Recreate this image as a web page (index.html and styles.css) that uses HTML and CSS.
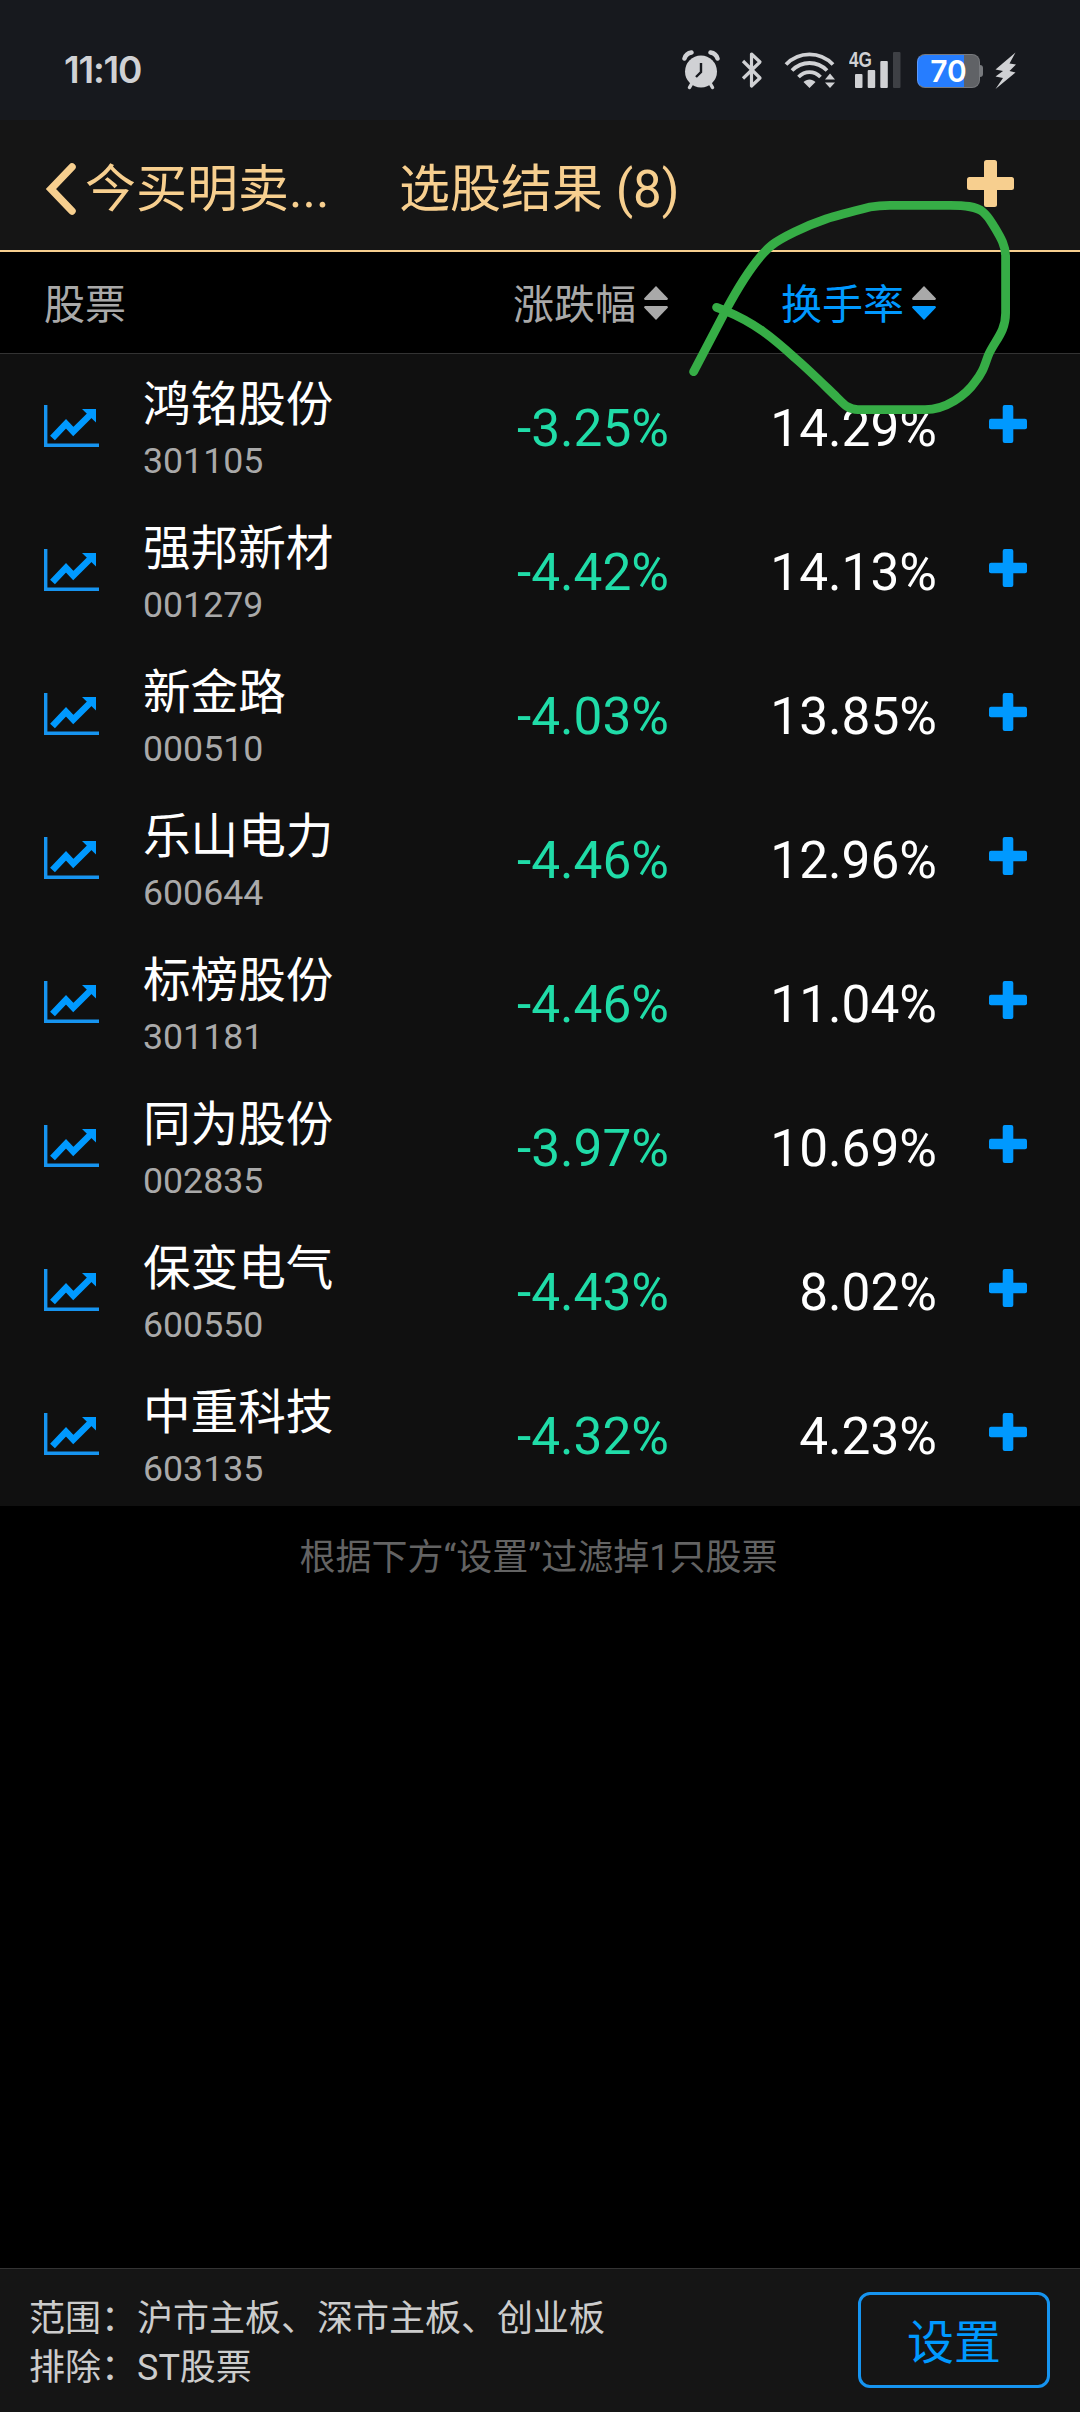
FILE: index.html
```html
<!DOCTYPE html>
<html lang="zh-CN">
<head>
<meta charset="UTF-8" />
<meta name="viewport" content="width=device-width, initial-scale=1" />
<title>选股结果</title>
<link rel="stylesheet" href="styles.css">
</head>
<body>
<svg class="symbols" aria-hidden="true">
  <symbol id="chart" viewBox="0 0 56 42">
    <path d="M1.7 0v40.2H55" fill="none" stroke="#1694f0" stroke-width="3.4"/>
    <path d="M8.500 33 22 18.700l7.300 7.800L46 10" fill="none" stroke="#0099ff" stroke-width="6.600"/>
    <path d="M38 4h14v13.500z" fill="#0099ff"/>
  </symbol>
  <symbol id="plus" viewBox="0 0 38 38">
    <rect x="13.700" y="0" width="10.600" height="38" rx="2"/>
    <rect x="0" y="13.700" width="38" height="10.600" rx="2"/>
  </symbol>
</svg>

<div class="status-bar">
  <span class="clock">11:10</span>
  <div class="status-icons">
    <svg class="alarm" width="38" height="40" viewBox="0 0 38 40">
      <g fill="none" stroke="#d0d1d4" stroke-linecap="round">
        <path d="M2.500 8.500C3.500 5 6 3 9.500 2.500M35.500 8.500C34.500 5 32 3 28.500 2.500" stroke-width="4.500"/>
        <path d="M9.500 34 7.500 37.500M28.500 34l2 3.500" stroke-width="3.500"/>
      </g>
      <circle cx="19" cy="21.500" r="16" fill="#d0d1d4"/>
      <path d="M19 13v9l-5 5" fill="none" stroke="#17191e" stroke-width="2.400"/>
    </svg>
    <svg class="bluetooth" width="22" height="38" viewBox="0 0 22 38">
      <path d="M2 10l17 17-8.500 8V3l8.500 8L2 27.500" fill="none" stroke="#d0d1d4" stroke-width="3.200" stroke-linejoin="round"/>
    </svg>
    <svg class="wifi" width="52" height="38" viewBox="0 0 52 38">
      <g fill="none" stroke="#d0d1d4" stroke-width="3.800">
        <path d="M2 13.500C15 0 36 0 49 13.500"/>
        <path d="M8 19.500C18 9.500 33 9.500 43 19.500"/>
        <path d="M14.500 26C21 19.500 30 19.500 36.500 26"/>
      </g>
      <path d="M19.500 31C23 27.500 28 27.500 31.500 31l-6 6zM41 28.500l5-6 5 6zM41 31.500l5 5.500 5-5.500z" fill="#d0d1d4"/>
    </svg>
    <div class="signal">
      <span class="network">4G</span>
      <svg width="46" height="38" viewBox="0 0 46 38" fill="#d0d1d4">
        <rect x="0" y="23" width="7.500" height="14" rx="1"/>
        <rect x="12.700" y="19" width="7.500" height="18" rx="1"/>
        <rect x="25.300" y="10" width="7.500" height="27" rx="1"/>
        <rect x="38" y="1" width="7.500" height="36" rx="1" fill="#3e4045"/>
      </svg>
    </div>
    <div class="battery"><span>70</span></div>
    <svg class="bolt" width="22" height="38" viewBox="0 0 22 38">
      <path d="M20.500.5.500 17.500l7.500 1.500-7.500 5.500L8 26 .5 37 20.500 20.500l-6-1.500 6.500-6.500-6.500-1z" fill="#d0d1d4"/>
    </svg>
  </div>
</div>

<header class="header">
  <div class="back">
    <svg width="32" height="52" viewBox="0 0 32 52">
      <path d="M27 4 6 26l21 22" fill="none" stroke="#f7cf8f" stroke-width="7.500" stroke-linecap="round"/>
    </svg>
    <span>今买明卖...</span>
  </div>
  <h1>选股结果 (8)</h1>
  <svg class="header-add" width="47" height="47" viewBox="0 0 47 47" fill="#f7cf8f">
    <rect x="17" y="0" width="13" height="47" rx="2.500"/>
    <rect x="0" y="17" width="47" height="13" rx="2.500"/>
  </svg>
</header>

<div class="table-head">
  <span class="head-name">股票</span>
  <span class="head-cell">涨跌幅<i class="sort"><b class="up"></b><b class="down"></b></i></span>
  <span class="head-cell active">换手率<i class="sort"><b class="up"></b><b class="down"></b></i></span>
</div>

<main class="stock-list">
  <div class="stock">
    <svg class="chart"><use href="#chart"/></svg>
    <div class="info"><p class="name">鸿铭股份</p><p class="code">301105</p></div>
    <span class="value change">-3.25%</span>
    <span class="value">14.29%</span>
    <svg class="add"><use href="#plus"/></svg>
  </div>
  <div class="stock">
    <svg class="chart"><use href="#chart"/></svg>
    <div class="info"><p class="name">强邦新材</p><p class="code">001279</p></div>
    <span class="value change">-4.42%</span>
    <span class="value">14.13%</span>
    <svg class="add"><use href="#plus"/></svg>
  </div>
  <div class="stock">
    <svg class="chart"><use href="#chart"/></svg>
    <div class="info"><p class="name">新金路</p><p class="code">000510</p></div>
    <span class="value change">-4.03%</span>
    <span class="value">13.85%</span>
    <svg class="add"><use href="#plus"/></svg>
  </div>
  <div class="stock">
    <svg class="chart"><use href="#chart"/></svg>
    <div class="info"><p class="name">乐山电力</p><p class="code">600644</p></div>
    <span class="value change">-4.46%</span>
    <span class="value">12.96%</span>
    <svg class="add"><use href="#plus"/></svg>
  </div>
  <div class="stock">
    <svg class="chart"><use href="#chart"/></svg>
    <div class="info"><p class="name">标榜股份</p><p class="code">301181</p></div>
    <span class="value change">-4.46%</span>
    <span class="value">11.04%</span>
    <svg class="add"><use href="#plus"/></svg>
  </div>
  <div class="stock">
    <svg class="chart"><use href="#chart"/></svg>
    <div class="info"><p class="name">同为股份</p><p class="code">002835</p></div>
    <span class="value change">-3.97%</span>
    <span class="value">10.69%</span>
    <svg class="add"><use href="#plus"/></svg>
  </div>
  <div class="stock">
    <svg class="chart"><use href="#chart"/></svg>
    <div class="info"><p class="name">保变电气</p><p class="code">600550</p></div>
    <span class="value change">-4.43%</span>
    <span class="value">8.02%</span>
    <svg class="add"><use href="#plus"/></svg>
  </div>
  <div class="stock">
    <svg class="chart"><use href="#chart"/></svg>
    <div class="info"><p class="name">中重科技</p><p class="code">603135</p></div>
    <span class="value change">-4.32%</span>
    <span class="value">4.23%</span>
    <svg class="add"><use href="#plus"/></svg>
  </div>
</main>

<p class="filter-note">根据下方“设置”过滤掉1只股票</p>

<footer class="footer">
  <div class="scope">
    <p>范围：沪市主板、深市主板、创业板</p>
    <p>排除：ST股票</p>
  </div>
  <button type="button" class="settings-btn">设置</button>
</footer>

<!-- hand-drawn mark around the turnover column -->
<svg class="mark" viewBox="680 190 340 230" width="340" height="230">
  <path d="M693.600 371.700 726 310C740 284 756 258 772 245C781 238 805 226 826 219C838 215 862 209 870 207C878 205.500 884 205.300 890 205.300H950C964 205.300 976 206 983 212C989 217 991 222 995 228C1001 238 1005.600 246 1005.600 256V313C1005.600 333 994 341 988 356C984 367 983 372 975 382C966 395 946 409.700 925 409.700H858C847 409.700 842 402 836 396.500C822 383 809 370 795 358C773 338 755 323 726 311L716.600 307.300"/>
</svg>
</body>
</html>
```

FILE: styles.css
```css
* {
  box-sizing: border-box;
}
body {
  position: relative;
  display: flex;
  flex-direction: column;
  width: 1080px;
  height: 2412px;
  margin: 0;
  overflow: hidden;
  background: #000;
  color: #fff;
  font-family: Roboto, "Noto Sans CJK SC", sans-serif;
}
p, h1 {
  margin: 0;
  font-weight: 400;
}
svg {
  display: block;
  flex-shrink: 0;
}
.symbols {
  position: absolute;
  width: 0;
  height: 0;
}

/* status bar */
.status-bar {
  display: flex;
  justify-content: space-between;
  height: 120px;
  padding: 50px 63px 0 64px;
  background: #17191e;
  color: #d0d1d4;
}
.clock {
  font-family: Inter, sans-serif;
  font-size: 37px;
  font-weight: 600;
  line-height: 40px;
  letter-spacing: -1.2px;
}
.status-icons {
  display: flex;
  align-items: flex-start;
}
.bluetooth {
  margin: 1px 0 0 21px;
}
.wifi {
  margin: 1px 0 0 21px;
}
.signal {
  position: relative;
  margin: 1px 0 0 19px;
}
.network {
  position: absolute;
  left: -6px;
  top: -1px;
  font-family: "Liberation Sans", sans-serif;
  font-size: 22px;
  font-weight: 700;
  line-height: 20px;
  transform: scaleX(0.78);
  transform-origin: left;
}
.battery {
  position: relative;
  width: 63px;
  height: 34px;
  margin: 4px 0 0 16px;
  border: 1px solid #77797d;
  border-left-color: #5b98fb;
  border-radius: 8px;
  background: linear-gradient(to right, #267dff 46px, #606266 46px);
  color: #fff;
  font-family: Inter, sans-serif;
  font-size: 30px;
  font-weight: 600;
  line-height: 33px;
  text-align: center;
}
.battery::after {
  content: "";
  position: absolute;
  right: -4px;
  top: 10px;
  width: 3px;
  height: 12px;
  border-radius: 0 3px 3px 0;
  background: #77797d;
}
.bolt {
  margin: 2px 0 0 15px;
}

/* header */
.header {
  display: flex;
  height: 132px;
  padding: 40px 66px 0 45px;
  border-bottom: 2px solid #f7cf8f;
  background: #151515;
  color: #f7cf8f;
  font-size: 51px;
  line-height: 60px;
}
.back {
  display: flex;
  width: 354px;
  gap: 8px;
}
.back svg {
  margin-top: 3px;
}
.header h1 {
  font-size: 51px;
}
.header-add {
  margin: 0 0 0 auto;
}

/* table head */
.table-head {
  display: grid;
  grid-template-columns: 356px 268px 268px;
  height: 102px;
  padding: 26px 0 0 44px;
  border-bottom: 1px solid #333;
  color: #a9a9a9;
  font-size: 41px;
  line-height: 54px;
}
.head-cell {
  display: flex;
  justify-content: flex-end;
  gap: 8px;
}
.head-cell.active {
  color: #0099ff;
}
.sort {
  display: flex;
  flex-direction: column;
  gap: 6px;
  padding-top: 8px;
}
.sort b {
  width: 24px;
  height: 14px;
  background: #a9a9a9;
}
.sort .up {
  clip-path: polygon(50% 0, 100% 90%, 97% 100%, 3% 100%, 0 90%);
}
.sort .down {
  clip-path: polygon(3% 0, 97% 0, 100% 10%, 50% 100%, 0 10%);
}
.sort .down {
  background: #a9a9a9;
}
.active .sort .down {
  background: #0099ff;
}

/* stocks */
.stock-list {
  background: #101010;
}
.stock {
  display: grid;
  grid-template-columns: 99px 258px 268px 268px 38px;
  height: 144px;
  padding-left: 44px;
}
.chart {
  width: 56px;
  height: 42px;
  margin-top: 51px;
}
.info {
  padding-top: 23px;
}
.name {
  font-size: 47.6px;
  line-height: 56px;
}
.code {
  margin-top: 7px;
  color: #a9a9a9;
  font-size: 35.7px;
  line-height: 42px;
}
.value {
  padding-top: 45px;
  font-size: 51.4px;
  line-height: 60px;
  text-align: right;
}
.change {
  color: #20dca8;
}
.add {
  width: 38px;
  height: 38px;
  margin: 51px 0 0 52px;
  fill: #0099ff;
}

.filter-note {
  padding: 30px 3px 0 0;
  color: #636363;
  font-size: 36px;
  line-height: 44px;
  text-align: center;
}

/* footer */
.footer {
  display: flex;
  justify-content: space-between;
  height: 144px;
  margin-top: auto;
  padding: 23px 30px 0 29px;
  border-top: 1px solid #333;
  background: #151515;
}
.scope {
  padding-top: 3px;
  color: #ccc;
  font-size: 36px;
  line-height: 49px;
}
.settings-btn {
  width: 192px;
  height: 96px;
  padding: 0 0 4px;
  border: 3px solid #1694f0;
  border-radius: 12px;
  background: none;
  color: #0099ff;
  font-family: inherit;
  font-size: 47px;
}

.mark {
  position: absolute;
  left: 680px;
  top: 190px;
  fill: none;
  stroke: #36ad46;
  stroke-width: 8.8;
  stroke-linecap: round;
  stroke-linejoin: round;
}
```
